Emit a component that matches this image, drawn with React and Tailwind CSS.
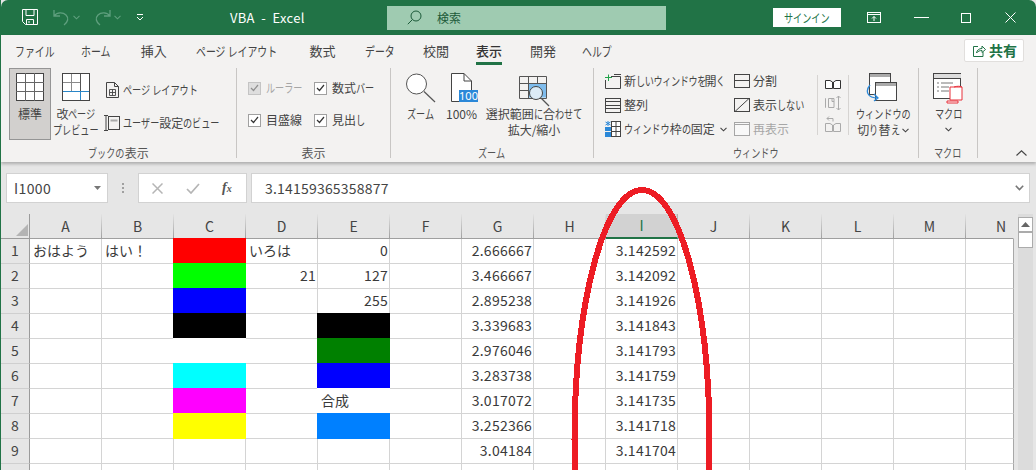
import React from "react";

const fontCls = "font-['Noto_Sans_CJK_JP','Noto_Sans',sans-serif]";

function J({ children }) {
  const parts = String(children).split(/([\u3040-\u30ff ]+)/);
  return (
    <>
      {parts.map((p, i) =>
        /^[\u3040-\u30ff ]+$/.test(p) ? (
          <span key={i} className="inline-block origin-left scale-x-[0.76] whitespace-pre" style={{ marginRight: `${-p.length * 0.24}em` }}>
            {p}
          </span>
        ) : (
          <span key={i}>{p}</span>
        )
      )}
    </>
  );
}

const Chev = ({ c = "#444", className = "" }) => (
  <svg width="7" height="5" viewBox="0 0 7 5" className={className} fill="none" stroke={c} strokeWidth="1.1"><path d="M.5 .8 3.5 3.8 6.5 .8" /></svg>
);

function TitleBar() {
  const dim = "#5f9f7e";
  return (
    <div className="flex h-[35px] items-center rounded-t-[7px] bg-[#217346] text-white">
      <svg width="17" height="17" viewBox="0 0 17 17" fill="none" stroke="#fff" strokeWidth="1" className="ml-[21px]">
        <path d="M.5 .5H15.5V15.5H3.5L.5 12.5Z" /><path d="M4 .5V6.5H12V.5M4.5 15.5V10.5H11.5V15.5M7 12V14" />
      </svg>
      <svg width="19" height="17" viewBox="0 0 19 17" fill="none" stroke={dim} strokeWidth="1.3" className="ml-[13px]">
        <path d="M2 1V7H8M2 7C5 3 11 3 14 6C17 9 16 13 12 16" />
      </svg>
      <Chev c={dim} className="ml-[2px]" />
      <svg width="19" height="17" viewBox="0 0 19 17" fill="none" stroke={dim} strokeWidth="1.3" className="ml-[13px]">
        <path d="M17 1V7H11M17 7C14 3 8 3 5 6C2 9 3 13 7 16" />
      </svg>
      <Chev c={dim} className="ml-[2px]" />
      <svg width="8" height="7" viewBox="0 0 8 7" fill="none" stroke="#fff" className="ml-[15px]"><path d="M1 .5H7" /><path d="M1 3 4 6 7 3" /></svg>
      <div className="ml-[86px] w-[75px] whitespace-pre text-[13px] leading-none tracking-[0.3px]">VBA  -  Excel</div>
      <div className="ml-[82px] flex h-[24px] w-[279px] items-center bg-[#9fcbb1] text-[12px] text-[#1c5a39]">
        <svg width="15" height="15" viewBox="0 0 15 15" fill="none" stroke="#1c5a39" className="ml-[20px]"><circle cx="9" cy="6" r="5" /><path d="M5.5 9.5 .8 14.2" /></svg>
        <span className="ml-[15px]">検索</span>
      </div>
      <div className="ml-[107px] flex h-[19px] w-[68px] items-center justify-center bg-white text-[12px] text-[#217346]"><J>サインイン</J></div>
      <svg width="14" height="11" viewBox="0 0 14 11" fill="none" stroke="#fff" className="ml-[26px]"><rect x=".5" y=".5" width="13" height="10" /><path d="M.5 2.5H13.5M7 9V4.5M5 6.5 7 4.5 9 6.5" /></svg>
      <svg width="15" height="1" className="ml-[33px]"><rect width="15" height="1" fill="#fff" /></svg>
      <svg width="10" height="10" viewBox="0 0 10 10" fill="none" stroke="#fff" className="ml-[32px]"><rect x=".5" y=".5" width="9" height="9" /></svg>
      <svg width="11" height="11" viewBox="0 0 11 11" fill="none" stroke="#fff" className="ml-[34px]"><path d="M.5 .5 10.5 10.5M10.5 .5 .5 10.5" /></svg>
    </div>
  );
}

function Tabs() {
  const tabs = [
    ["ファイル", ""],
    ["ホーム", "-ml-[3px]"],
    ["挿入", "ml-[2px]"],
    ["ページ レイアウト", ""],
    ["数式", "ml-[6px]"],
    ["データ", "ml-[1px]"],
    ["校閲", "-ml-[1px]"],
    ["表示", "-ml-[2px]"],
    ["開発", "-ml-[1px]"],
    ["ヘルプ", "-ml-[3px]"],
  ];
  return (
    <div className="flex h-[30px] items-center gap-[29px] pl-[14px] pr-[12px] pt-[1px] text-[13px] text-[#444]">
      {tabs.map(([t, m]) => (
        <div key={t} className={t === "表示" ? `relative flex h-full items-center border-b-[3px] border-[#217346] pt-[3px] font-medium text-[#333] ${m}` : `flex h-full items-center ${m}`}>
          <J>{t}</J>
        </div>
      ))}
      <div className="ml-auto flex h-[23px] w-[60px] items-center rounded-[2px] border border-[#e1dfdd] bg-white pl-[8px] text-[14px] font-bold text-[#217346]">
        <svg width="13" height="13" viewBox="0 0 13 13" fill="none" stroke="#217346" strokeWidth="1"><path d="M5 2.5H.5V12.5H10V8" /><path d="M3.5 9C4 6 6 4.5 9 4.5V2L12.5 5.5 9 8.5V6.5C7 6.5 5 7 3.5 9Z" /></svg>
        <span className="ml-[3px]">共有</span>
      </div>
    </div>
  );
}

function Group({ w, label, children, last }) {
  return (
    <div className={`flex h-[90px] flex-col ${last ? "" : "border-r border-[#c8c6c4]"}`} style={{ width: w }}>
      <div className="flex h-[76px] text-[12px] leading-[16px] text-[#444]">{children}</div>
      <div className="h-[14px] text-center text-[12px] leading-[18px] text-[#555]"><J>{label}</J></div>
    </div>
  );
}

const Big = ({ className = "", icon, lines, extra }) => (
  <div className={`flex flex-col items-center pt-[5px] ${className}`}>
    <div className="h-[33px]">{icon}</div>
    {lines.map((l) => (
      <div key={l} className="whitespace-nowrap"><J>{l}</J></div>
    ))}
    {extra}
  </div>
);

const Row = ({ h = "h-[24px]", icon, text, dim, chev, tight }) => (
  <div className={`flex items-center gap-[3px] whitespace-nowrap ${h} ${dim ? "text-[#a6a6a6]" : ""} ${tight ? "tracking-[-0.5px]" : ""}`}>
    <div className="flex w-[16px] justify-center">{icon}</div>
    <span><J>{text}</J></span>
    {chev && <Chev className="ml-[2px]" />}
  </div>
);

const Check = ({ text, off }) => (
  <div className={`flex h-[32px] items-center gap-[5px] ${off ? "text-[#a6a6a6]" : ""}`}>
    <div className={`flex h-[13px] w-[13px] items-center justify-center border ${off ? "border-[#c4c4c4] bg-[#dedede]" : "border-[#a0a0a0] bg-white"}`}>
      <svg width="9" height="8" viewBox="0 0 9 8" fill="none" stroke={off ? "#8f8f8f" : "#333"} strokeWidth="1.2"><path d="M1 4 3.5 6.5 8 1" /></svg>
    </div>
    <span className="whitespace-nowrap"><J>{text}</J></span>
  </div>
);

const IconNormal = () => (
  <svg width="28" height="28" viewBox="0 0 28 28" fill="#fff"><rect x=".5" y=".5" width="27" height="27" stroke="#444" /><path d="M9.5 0V28M18.5 0V28M0 9.5H28M0 18.5H28" stroke="#666" fill="none" /></svg>
);
const IconBreak = () => (
  <svg width="28" height="28" viewBox="0 0 28 28" fill="#fff"><rect x=".5" y=".5" width="27" height="27" stroke="#444" /><path d="M9.5 1V18M1 9.5H18" stroke="#8a8a8a" fill="none" /><path d="M18.5 1V18" stroke="#555" fill="none" /><path d="M1 18.5H27M18.5 18V27" stroke="#2a86c8" fill="none" /></svg>
);
const IconPage = () => (
  <svg width="13" height="16" viewBox="0 0 13 16" fill="none" stroke="#444"><path d="M.5 .5H8.5L12.5 4.5V15.5H.5Z" /><path d="M8.5 .5V4.5H12.5" /><path d="M3.5 7.5H9.5V13.5H3.5ZM6.5 7.5V13.5M3.5 10.5H9.5" strokeWidth=".9" /></svg>
);
const IconCustom = () => (
  <svg width="16" height="16" viewBox="0 0 16 16" fill="none" stroke="#444"><path d="M0 .5H4M2 .5V15.5M0 15.5H4" /><rect x="4.5" y="1.5" width="11" height="13" /><rect x="6.5" y="4.5" width="7" height="2" fill="#aaa" stroke="none" /></svg>
);
const IconLens = () => (
  <svg width="30" height="30" viewBox="0 0 30 30" fill="none" stroke="#555"><circle cx="10.5" cy="11" r="10" fill="#fff" /><path d="M18 18.5 29 29" strokeWidth="1.2" /></svg>
);
const IconHundred = () => (
  <div className="ml-[5px] h-[30px] w-[27px]">
    <svg width="27" height="30" viewBox="0 0 27 30" fill="none">
      <path d="M.5 .5H13L20.5 8V28.5H.5Z" fill="#fff" stroke="#444" /><path d="M13 .5V8H20.5" stroke="#444" />
      <rect x="8" y="17" width="19" height="12" fill="#2b88d8" />
      <text x="17.5" y="27" textAnchor="middle" fontSize="11" fill="#fff" fontFamily="Noto Sans">100</text>
    </svg>
  </div>
);
const IconSel = () => (
  <svg width="31" height="31" viewBox="0 0 31 31" fill="none" className="mt-[3px]">
    <rect x="9.5" y="7.5" width="18" height="14" fill="#7fbcec" />
    <path d="M.5 .5H27.5V22.5H.5ZM0 7.5H28M0 14.5H10M9.5 0V22M18.5 0V8" stroke="#555" />
    <circle cx="17" cy="17" r="6.5" fill="#dcebf6" stroke="#444" />
    <path d="M22 22 30 30" stroke="#555" strokeWidth="1.2" />
  </svg>
);
const IconNewWin = () => (
  <svg width="16" height="15" viewBox="0 0 16 15" fill="none"><path d="M.5 6V14.5H15.5V2.5H6" stroke="#444" /><path d="M9 .5H16" stroke="#444" /><path d="M3.5 .5V7M0 3.5H7" stroke="#22a34a" /></svg>
);
const IconArrange = () => (
  <svg width="16" height="15" viewBox="0 0 16 15" fill="none" stroke="#444"><rect x=".5" y=".5" width="15" height="14" /><path d="M0 3.5H16" /><path d="M0 7.5H16" /><path d="M0 10.5H16" /></svg>
);
const IconFreeze = () => (
  <svg width="16" height="16" viewBox="0 0 16 16" fill="none"><rect x="6.5" y=".5" width="9" height="15" fill="#fff" stroke="#444" /><path d="M6 5.5H16M6 10.5H16M11 0V16" stroke="#444" /><rect x="0" y="6" width="6" height="4" fill="#2b88d8" /><rect x="0" y="11" width="6" height="5" fill="#2b88d8" /><path d="M3 0V5M.5 1 5.5 4M5.5 1 .5 4" stroke="#2b88d8" /></svg>
);
const IconSplit = () => (
  <svg width="16" height="14" viewBox="0 0 16 14" fill="none" stroke="#444"><rect x=".5" y=".5" width="15" height="13" /><path d="M0 6.5H16" /></svg>
);
const IconHide = () => (
  <svg width="16" height="14" viewBox="0 0 16 14" fill="none" stroke="#444"><rect x=".5" y=".5" width="15" height="13" /><path d="M1 13.5 15 .5" /></svg>
);
const IconShow = () => (
  <svg width="16" height="14" viewBox="0 0 16 14" fill="none" stroke="#a6a6a6"><rect x=".5" y=".5" width="15" height="13" fill="#f8f8f8" /><path d="M0 2.5H16" /></svg>
);
const IconBooks = ({ c = "#333", fill = "#fff" }) => (
  <svg width="16" height="10" viewBox="0 0 16 10" fill={fill} stroke={c}><path d="M.5 9.5V1.5H5L7.5 3V9.5Z" /><path d="M8.5 9.5V3L11 1.5H15.5V9.5Z" /></svg>
);
const IconSync = () => (
  <svg width="16" height="16" viewBox="0 0 16 16" fill="none" stroke="#aaa"><path d="M1 3.5H.5V12.5H1M3.5 3.5H9V12.5H3.5ZM7 3.5V6.5H9" /><path d="M13.5 1V15M11.5 3 13.5 1 15.5 3M11.5 13 13.5 15 15.5 13" /></svg>
);
const IconReset = () => (
  <div className="flex flex-col">
    <svg width="16" height="6" viewBox="0 0 16 6" fill="none" stroke="#aaa"><path d="M8 5.5V2.5H2M4 .5 2 2.5 4 4.5" /></svg>
    <IconBooks c="#aaa" fill="none" />
  </div>
);
const IconSwitch = () => (
  <svg width="31" height="29" viewBox="0 0 31 29" fill="none" className="-ml-[3px]">
    <rect x="3.5" y=".5" width="21" height="21" fill="#fff" stroke="#444" /><rect x="4" y="1" width="20" height="3" fill="#aaa" />
    <rect x="9.5" y="9.5" width="21" height="18" fill="#fff" stroke="#444" /><rect x="10" y="10" width="20" height="3" fill="#aaa" />
    <path d="M4 12C-1 18 1 25 12 25M8 21 12 25 8 28" stroke="#2b88d8" strokeWidth="1.3" />
  </svg>
);
const IconMacro = () => (
  <svg width="31" height="31" viewBox="0 0 31 31" fill="none">
    <rect x=".5" y=".5" width="27" height="25" fill="#fff" stroke="#444" /><rect x="1" y="1" width="27" height="4" fill="#ddd" /><path d="M0 5.5H28" stroke="#444" />
    <path d="M4 10H6M8 10H20M4 14H6M8 14H16M4 18H6M8 18H16" stroke="#777" />
    <path d="M17 14H29V27H26M17 14V27H26M29 14C27 13 24 13 21 14M14 28H25V30H14Z" stroke="#e8303a" fill="#fff" />
  </svg>
);

function Ribbon() {
  return (
    <div className="relative z-10 h-[127px] bg-[#f3f2f1] shadow-[0_2px_3px_rgba(0,0,0,0.25)]">
      <Tabs />
      <div className="flex pt-[3px]">
        <Group w={236} label="ブックの表示">
          <div className="ml-[8px] flex h-[72px] w-[42px] flex-col items-center border border-[#959595] bg-[#d2d0ce] pt-[4px]">
            <div className="h-[33px]"><IconNormal /></div>
            <div><J>標準</J></div>
          </div>
          <Big className="ml-[4px] w-[42px]" icon={<IconBreak />} lines={["改ページ", "プレビュー"]} />
          <div className="ml-[7px] pt-[5px]">
            <Row h="h-[33px]" icon={<IconPage />} text="ページ レイアウト" />
            <Row h="h-[33px]" icon={<IconCustom />} text="ユーザー設定のビュー" />
          </div>
        </Group>
        <Group w={154} label="表示">
          <div className="ml-[11px] w-[66px] pt-[4px]">
            <Check off text="ルーラー" />
            <Check text="目盛線" />
          </div>
          <div className="pt-[4px]">
            <Check text="数式バー" />
            <Check text="見出し" />
          </div>
        </Group>
        <Group w={203} label="ズーム">
          <Big className="ml-[13px] w-[33px]" icon={<IconLens />} lines={["ズーム"]} />
          <Big className="ml-[8px] w-[33px]" icon={<IconHundred />} lines={["100%"]} />
          <Big className="ml-[7px] w-[98px]" icon={<IconSel />} lines={["選択範囲に合わせて", "拡大/縮小"]} />
        </Group>
        <Group w={325} label="ウィンドウ">
          <div className="ml-[11px] w-[129px] pt-[1px]">
            <Row tight icon={<IconNewWin />} text="新しいウィンドウを開く" />
            <Row icon={<IconArrange />} text="整列" />
            <Row icon={<IconFreeze />} text="ウィンドウ枠の固定" chev />
          </div>
          <div className="w-[83px] pt-[1px]">
            <Row icon={<IconSplit />} text="分割" />
            <Row icon={<IconHide />} text="表示しない" />
            <Row dim icon={<IconShow />} text="再表示" />
          </div>
          <div className="mt-[7px] flex h-[60px] w-[32px] flex-col items-center border-x border-[#d6d4d2]">
            <div className="flex h-[20px] items-center"><IconBooks /></div>
            <div className="flex h-[24px] items-center"><IconSync /></div>
            <div className="flex h-[24px] items-center"><IconReset /></div>
          </div>
          <Big className="ml-[7px] w-[54px]" icon={<IconSwitch />} lines={["ウィンドウの"]} extra={<div className="flex items-center whitespace-nowrap"><J>切り替え</J><Chev className="ml-[2px]" /></div>} />
        </Group>
        <Group w={59} label="マクロ">
          <Big className="ml-[14px] w-[31px]" icon={<IconMacro />} lines={["マクロ"]} extra={<Chev className="mt-[5px]" />} />
        </Group>
        <div className="flex flex-1 items-end justify-end pb-[2px] pr-[9px]">
          <svg width="11" height="6" viewBox="0 0 11 6" fill="none" stroke="#444" strokeWidth="1.1"><path d="M.5 5.5 5.5 .8 10.5 5.5" /></svg>
        </div>
      </div>
    </div>
  );
}

function FormulaBar() {
  return (
    <div className="flex h-[52px] items-center pl-[5px] text-[14px] text-[#444]">
      <div className="flex h-[30px] w-[102px] items-center justify-between border border-[#d2d2d2] bg-white pl-[7px] pr-[6px]">
        <span className="tracking-[0.4px]">I1000</span>
        <svg width="7" height="4" viewBox="0 0 7 4"><path d="M0 0H7L3.5 4Z" fill="#777" /></svg>
      </div>
      <div className="flex w-[30px] flex-col items-center gap-[2px]">
        <i className="block h-[2px] w-[2px] bg-[#a0a0a0]" /><i className="block h-[2px] w-[2px] bg-[#a0a0a0]" /><i className="block h-[2px] w-[2px] bg-[#a0a0a0]" />
      </div>
      <div className="flex h-[30px] w-[109px] items-center border border-[#d2d2d2] bg-white">
        <svg width="11" height="11" viewBox="0 0 11 11" fill="none" stroke="#b5b5b5" strokeWidth="1.5" className="ml-[13px]"><path d="M.5 .5 10.5 10.5M10.5 .5 .5 10.5" /></svg>
        <svg width="14" height="11" viewBox="0 0 14 11" fill="none" stroke="#b5b5b5" strokeWidth="1.7" className="ml-[23px]"><path d="M1 6 5 10 13 1" /></svg>
        <span className="ml-[22px] font-['Liberation_Serif',serif] text-[14px] font-bold italic leading-none text-[#555]">f<span className="text-[10px]">x</span></span>
      </div>
      <div className="ml-[4px] flex h-[30px] w-[779px] items-center justify-between border border-[#d2d2d2] bg-white pl-[13px] pr-[5px]">
        <span className="tracking-[0.2px]">3.14159365358877</span>
        <svg width="9" height="6" viewBox="0 0 9 6" fill="none" stroke="#777" strokeWidth="1.6"><path d="M.8 .8 4.5 4.5 8.2 .8" /></svg>
      </div>
    </div>
  );
}

const LETTERS = ["A", "B", "C", "D", "E", "F", "G", "H", "I", "J", "K", "L", "M", "N"];
const G = ["2.666667", "3.466667", "2.895238", "3.339683", "2.976046", "3.283738", "3.017072", "3.252366", "3.04184", ""];
const I = ["3.142592", "3.142092", "3.141926", "3.141843", "3.141793", "3.141759", "3.141735", "3.141718", "3.141704", ""];

const FILL = {
  red: "bg-[#ff0000] border-[#ff0000] shadow-[-1px_-1px_0_#ff0000,-1px_0_0_#ff0000,0_-1px_0_#ff0000]",
  lime: "bg-[#00ff00] border-[#00ff00] shadow-[-1px_-1px_0_#00ff00,-1px_0_0_#00ff00,0_-1px_0_#00ff00]",
  blue: "bg-[#0000ff] border-[#0000ff] shadow-[-1px_-1px_0_#0000ff,-1px_0_0_#0000ff,0_-1px_0_#0000ff]",
  black: "bg-black border-black shadow-[-1px_-1px_0_#000,-1px_0_0_#000,0_-1px_0_#000]",
  white: "bg-white border-white shadow-[-1px_-1px_0_#fff,-1px_0_0_#fff,0_-1px_0_#fff]",
  cyan: "bg-[#00ffff] border-[#00ffff] shadow-[-1px_-1px_0_#00ffff,-1px_0_0_#00ffff,0_-1px_0_#00ffff]",
  magenta: "bg-[#ff00ff] border-[#ff00ff] shadow-[-1px_-1px_0_#ff00ff,-1px_0_0_#ff00ff,0_-1px_0_#ff00ff]",
  yellow: "bg-[#ffff00] border-[#ffff00] shadow-[-1px_-1px_0_#ffff00,-1px_0_0_#ffff00,0_-1px_0_#ffff00]",
  green: "bg-[#008000] border-[#008000] shadow-[-1px_-1px_0_#008000,-1px_0_0_#008000,0_-1px_0_#008000]",
  sky: "bg-[#0080ff] border-[#0080ff] shadow-[-1px_-1px_0_#0080ff,-1px_0_0_#0080ff,0_-1px_0_#0080ff]",
};
const C_FILL = ["red", "lime", "blue", "black", "white", "cyan", "magenta", "yellow"];
const E_FILL = [null, null, null, "black", "green", "blue", "white", "sky"];
const TEXT = {
  "A0": ["おはよう", "l"], "B0": ["はい！", "l"], "D0": ["いろは", "l"],
  "E0": ["0", "r"], "D1": ["21", "r"], "E1": ["127", "r"], "E2": ["255", "r"], "E6": ["合成", "l"],
};

function Cell({ col, row }) {
  let fill = null;
  if (col === "C") fill = C_FILL[row];
  if (col === "E") fill = E_FILL[row];
  let t = TEXT[col + row];
  if (col === "G" && G[row]) t = [G[row], "r"];
  if (col === "I" && I[row]) t = [I[row], "r"];
  const cls = fill ? FILL[fill] : "border-[#d4d4d4]";
  const align = t && t[1] === "r" ? "justify-end pr-[1px] tracking-[0.25px]" : "justify-start pl-[3px]";
  const nExtra = col === "N" ? "border-r-[#a8a8a8]" : "";
  return (
    <div className={`flex items-center whitespace-nowrap border-b border-r pb-[2px] text-[14px] text-[#3a3a3a] ${cls} ${align} ${nExtra}`}>
      {t ? t[0] : ""}
    </div>
  );
}

function Sheet() {
  return (
    <div className="flex h-[256px] overflow-hidden">
      <div className="grid w-[1013px] grid-cols-[29px_repeat(13,72px)_48px] grid-rows-[25px_repeat(10,25px)] bg-white text-[14px]">
        <div className="flex items-end justify-end border-b border-r border-b-[#9b9b9b] border-r-[#9b9b9b] bg-[#e6e6e6] pb-[2px] pr-[1px]">
          <svg width="12" height="12" viewBox="0 0 12 12"><path d="M12 0V12H0Z" fill="#b4b4b4" /></svg>
        </div>
        {LETTERS.map((l) => (
          <div
            key={l}
            className={
              l === "I"
                ? "flex items-center justify-center border-b-2 border-r border-b-[#217346] border-r-[#b4b4b4] bg-[#d2d2d2] text-[#217346]"
                : l === "N"
                ? "flex items-center border-b border-r border-[#e6e6e6] border-b-[#9b9b9b] bg-[#e6e6e6] pl-[30px] text-[#444]"
                : "flex items-center justify-center border-b border-r bg-[#e6e6e6] text-[#444] [border-image:linear-gradient(#e6e6e6,#9e9e9e)_1]"
            }
          >
            {l}
          </div>
        ))}
        {Array.from({ length: 10 }, (_, r) => (
          <React.Fragment key={r}>
            <div className="flex items-center justify-center border-b border-r border-b-[#cfcfcf] border-r-[#9b9b9b] bg-[#e6e6e6] pb-[1px] text-[#444]">{r < 9 ? r + 1 : ""}</div>
            {LETTERS.map((l) => (
              <Cell key={l} col={l} row={r} />
            ))}
          </React.Fragment>
        ))}
      </div>
      <div className="w-[23px] bg-[#e6e6e6] pl-[4px]">
        <div className="h-full w-[15px] bg-[#dcdcdc] pt-[3px]">
          <div className="flex h-[15px] items-center justify-center border border-[#ababab] bg-white">
            <svg width="9" height="5" viewBox="0 0 9 5"><path d="M4.5 0 9 5H0Z" fill="#666" /></svg>
          </div>
          <div className="h-[16px] border border-[#ababab] bg-white" />
        </div>
      </div>
    </div>
  );
}

export default function App() {
  return (
    <div className={`relative h-[470px] w-[1036px] overflow-hidden border-l border-[#217346] bg-[#e6e6e6] ${fontCls}`}>
      <TitleBar />
      <Ribbon />
      <FormulaBar />
      <Sheet />
      <svg width="1036" height="470" viewBox="0 0 1036 470" fill="none" shapeRendering="crispEdges" className="pointer-events-none absolute -left-px top-0 z-20">
        <ellipse cx="642" cy="440" rx="67.5" ry="250" stroke="#ed1c24" strokeWidth="6" />
      </svg>
    </div>
  );
}
